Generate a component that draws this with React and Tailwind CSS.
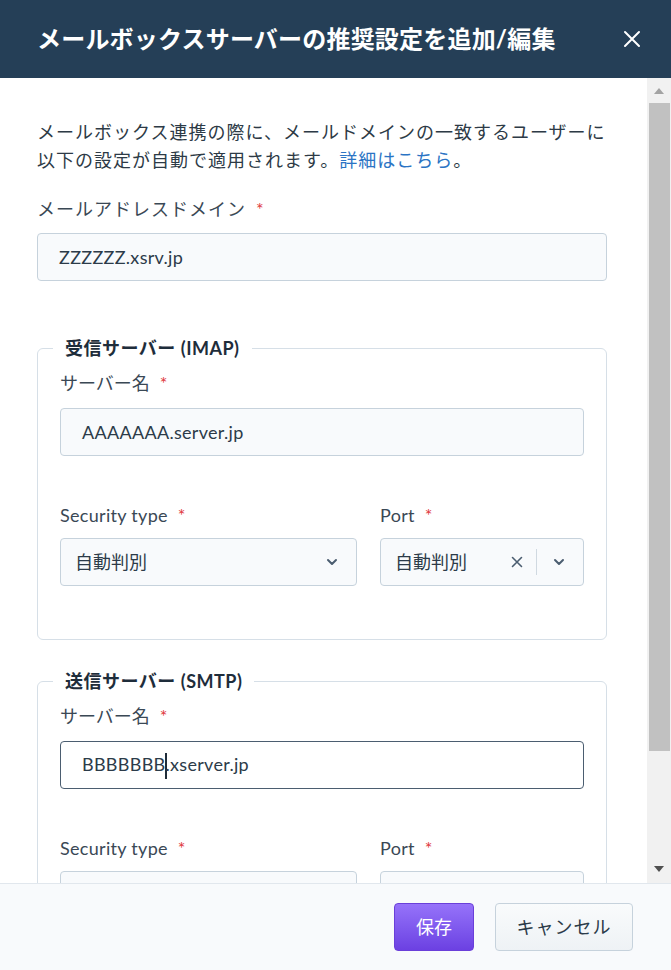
import React from "react";

const font = { fontFamily: '"Lato", "Noto Sans CJK JP", sans-serif' };

function Required() {
  return <span className="ml-[10px] text-[#e0383e] text-[18px]">*</span>;
}

function Label({ children }) {
  return (
    <div className="text-[18px] leading-[28px] text-[#3a4855]">
      {children}
      <Required />
    </div>
  );
}

function TextBox({ value, focused, caretAfter }) {
  return (
    <div
      className={`h-[48px] flex items-center px-[21px] rounded-[4px] border text-[18px] text-[#2c3b49] tracking-[0.3px] ${
        focused ? "bg-white border-[#4b5d70]" : "bg-[#f8fafc] border-[#c6d2dc]"
      }`}
    >
      {caretAfter ? (
        <span>
          {value.slice(0, caretAfter)}
          <span className="inline-block w-[2px] h-[26px] bg-[#1f2d3a] align-middle -mx-[1px]" />
          {value.slice(caretAfter)}
        </span>
      ) : (
        value
      )}
    </div>
  );
}

function Chevron() {
  return (
    <svg width="14" height="14" viewBox="0 0 14 14" fill="none">
      <path d="M3 5l4 4 4-4" stroke="#4b5d70" strokeWidth="2" strokeLinecap="round" strokeLinejoin="round" />
    </svg>
  );
}

function SelectBox({ value, clearable, empty }) {
  return (
    <div className="h-[48px] flex items-center pl-[14px] pr-[17px] rounded-[4px] border border-[#c6d2dc] bg-[#f8fafc] text-[18px] text-[#2c3b49]">
      <span className="flex-1">{empty ? "" : value}</span>
      {clearable && (
        <>
          <svg width="14" height="14" viewBox="0 0 14 14" fill="none" className="mr-[12px]">
            <path d="M2.5 2.5l9 9M11.5 2.5l-9 9" stroke="#4b5d70" strokeWidth="1.6" strokeLinecap="round" />
          </svg>
          <span className="w-px h-[26px] bg-[#d0d9e1] mr-[15px]" />
        </>
      )}
      <Chevron />
    </div>
  );
}

function ServerFieldset({ title, server, focused, caretAfter, hideSelects, className }) {
  return (
    <fieldset className={`border border-[#d6dfe7] rounded-[6px] px-[22px] pb-[53px] ${className}`}>
      <legend className="-ml-[7px] px-[12px] text-[18px] leading-[28px] font-bold text-[#1e2d3b] tracking-[0.5px]">
        {title}
      </legend>
      <div className="mt-[7px] mb-[11px]">
        <Label>サーバー名</Label>
      </div>
      <TextBox value={server} focused={focused} caretAfter={caretAfter} />
      <div className="mt-[45px] grid grid-cols-[297px_1fr] gap-x-[23px]">
        <div>
          <div className="mb-[9px] tracking-[0.3px]">
            <Label>Security type</Label>
          </div>
          <SelectBox value="自動判別" empty={hideSelects} />
        </div>
        <div>
          <div className="mb-[9px] tracking-[0.3px]">
            <Label>Port</Label>
          </div>
          <SelectBox value="自動判別" clearable={!hideSelects} empty={hideSelects} />
        </div>
      </div>
    </fieldset>
  );
}

function Scrollbar() {
  return (
    <div className="w-[24px] bg-[#f1f1f1] flex flex-col">
      <div className="h-[25px] flex items-center justify-center">
        <svg width="12" height="8" viewBox="0 0 12 8">
          <path d="M6 1l5 6H1z" fill="#a3a3a3" />
        </svg>
      </div>
      <div className="ml-[2px] mr-px h-[648px] bg-[#c1c1c1]" />
      <div className="flex-1 flex items-end justify-center pb-[10px]">
        <svg width="12" height="8" viewBox="0 0 12 8">
          <path d="M1 1h10L6 7z" fill="#505050" />
        </svg>
      </div>
    </div>
  );
}

export default function App() {
  return (
    <div className="h-[970px] w-full flex flex-col bg-white" style={font}>
      <header className="h-[78px] shrink-0 bg-[#253f57] flex items-center pl-[37px] pr-[30px]">
        <h1 className="flex-1 text-white text-[24px] font-bold tracking-[0.2px]">
          メールボックスサーバーの推奨設定を追加/編集
        </h1>
        <svg width="18" height="18" viewBox="0 0 18 18" fill="none">
          <path d="M2 2l14 14M16 2L2 16" stroke="white" strokeWidth="2" strokeLinecap="round" />
        </svg>
      </header>

      <div className="flex-1 flex min-h-0 overflow-hidden">
        <div className="flex-1 overflow-hidden pl-[37px] pr-[40px] pt-[40px]">
          <p className="text-[18px] leading-[28px] text-[#2d3a46] tracking-[1px]">
            メールボックス連携の際に、メールドメインの一致するユーザーに
            <br />
            以下の設定が自動で適用されます。
            <span className="text-[#2b74c4]">詳細はこちら</span>。
          </p>
          <div className="mt-[21px] mb-[10px] tracking-[1px]">
            <Label>メールアドレスドメイン</Label>
          </div>
          <TextBox value="ZZZZZZ.xsrv.jp" />

          <ServerFieldset title="受信サーバー (IMAP)" server="AAAAAAA.server.jp" className="mt-[53px]" />
          <ServerFieldset
            title="送信サーバー (SMTP)"
            server="BBBBBBB.xserver.jp"
            focused
            caretAfter={7}
            hideSelects
            className="mt-[27px]"
          />
        </div>
        <Scrollbar />
      </div>

      <footer className="h-[87px] shrink-0 bg-[#f8fafc] border-t border-[#e1e7ed] flex items-center justify-end gap-[21px] pr-[38px]">
        <button className="h-[48px] w-[80px] rounded-[4px] bg-gradient-to-b from-[#9672fa] to-[#6c40e2] border border-[#6a3fd9] text-white text-[18px]">
          保存
        </button>
        <button className="h-[48px] w-[138px] rounded-[4px] bg-gradient-to-b from-[#f9fbfc] to-[#eef2f5] border border-[#c6d2dc] text-[#2c3b49] text-[18px] tracking-[1px]">
          キャンセル
        </button>
      </footer>
    </div>
  );
}
